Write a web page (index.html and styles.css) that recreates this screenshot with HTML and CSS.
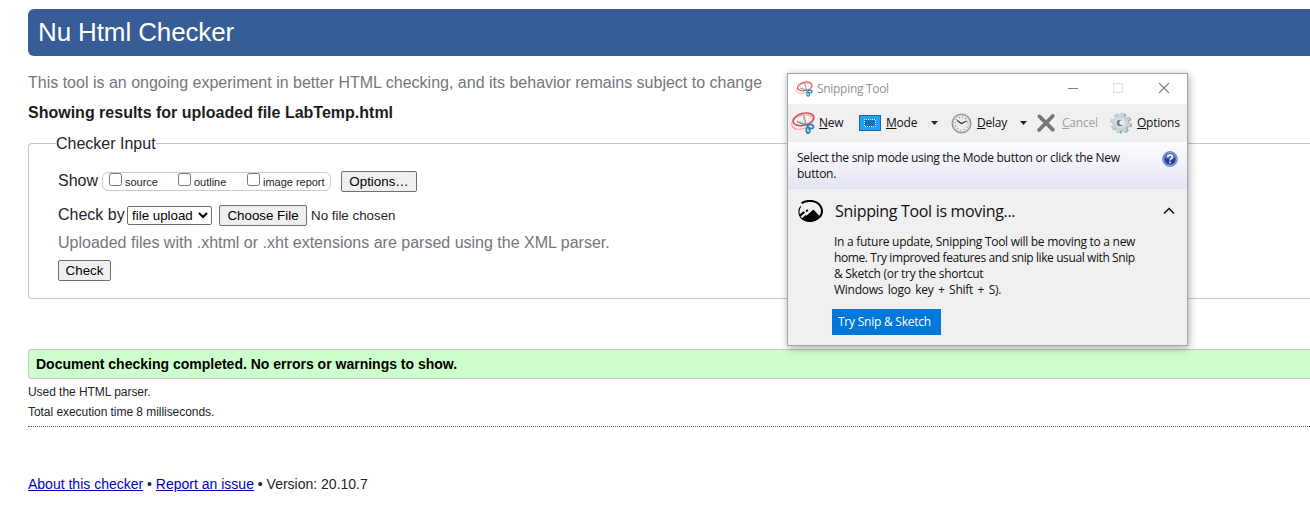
FILE: index.html
```html
<!DOCTYPE html>
<html lang="en">
<head>
<meta charset="utf-8">
<title>Nu Html Checker</title>
<link rel="stylesheet" href="styles.css">
</head>
<body>
<main class="page">
  <h1 class="banner">Nu Html Checker</h1>
  <p class="about">This tool is an ongoing experiment in better HTML checking, and its behavior remains subject to change</p>
  <h2 class="results-title">Showing results for uploaded file LabTemp.html</h2>
  <fieldset class="input">
    <legend>Checker Input</legend>
    <div class="row show-row">
      <span class="show-label">Show</span>
      <div class="show-options">
        <label><input type="checkbox"><span class="t-source">source</span></label>
        <label><input type="checkbox"><span class="t-outline">outline</span></label>
        <label><input type="checkbox"><span class="t-image">image report</span></label>
      </div>
      <button class="btn btn-options"><span>Options…</span></button>
    </div>
    <div class="row check-row">
      <span class="check-label">Check by</span>
      <select class="method"><option>file upload</option></select>
      <button class="btn btn-choose"><span>Choose File</span></button>
      <span class="no-file">No file chosen</span>
    </div>
    <p class="hint">Uploaded files with .xhtml or .xht extensions are parsed using the XML parser.</p>
    <button class="btn btn-check"><span>Check</span></button>
  </fieldset>
  <p class="success">Document checking completed. No errors or warnings to show.</p>
  <p class="stat">Used the HTML parser.</p>
  <p class="stat">Total execution time 8 milliseconds.</p>
  <footer class="footer"><a href="#">About this checker</a> • <a href="#">Report an issue</a> • Version: 20.10.7</footer>
</main>

<svg width="0" height="0" class="defs">
  <symbol id="snip" viewBox="0 0 24 22">
    <ellipse cx="11.300" cy="10" rx="11" ry="6.600" transform="rotate(-20 11.3 10)" fill="none" stroke="#efa3a7" stroke-width="1.200"/>
    <ellipse cx="12.500" cy="7.300" rx="10.600" ry="6" transform="rotate(-14 12.5 7.3)" fill="none" stroke="#dc4348" stroke-width="1.400"/>
    <path d="M12.500 3.500l2.500 9.500M6 9.500l10 4" stroke="#7b868d" stroke-width="1.500" fill="none"/>
    <path d="M12.300 4l1.800 7M7 9.300l7 2" stroke="#d0d6da" stroke-width=".7" fill="none"/>
    <ellipse cx="19.600" cy="14.500" rx="3" ry="2" transform="rotate(10 19.6 14.5)" fill="none" stroke="#2484c6" stroke-width="1.800"/>
    <ellipse cx="17" cy="18.300" rx="1.700" ry="2.800" transform="rotate(-8 17 18.3)" fill="none" stroke="#2484c6" stroke-width="1.800"/>
  </symbol>
</svg>

<section class="window">
  <header class="titlebar">
    <svg class="title-icon" width="17" height="16"><use href="#snip"/></svg>
    <span class="title">Snipping Tool</span>
    <svg class="controls" width="106" height="14" viewBox="0 0 106 14" fill="none">
      <path d="M1 6.500h10" stroke="#808080"/>
      <rect x="46.500" y="1.500" width="9" height="9" stroke="#dedede"/>
      <path d="M92 1l10 10M102 1l-10 10" stroke="#808080" stroke-width="1.100"/>
    </svg>
  </header>
  <nav class="toolbar">
    <svg class="i-new" width="24" height="22"><use href="#snip"/></svg>
    <span class="t-new"><u>N</u>ew</span>
    <svg class="i-mode" width="22" height="16" viewBox="0 0 22 16"><rect x=".5" y=".5" width="21" height="15" fill="#26a0f4" stroke="#17689f"/><rect x="5.500" y="4.500" width="11" height="7" fill="#1273b8"/><rect x="5.500" y="4.500" width="11" height="7" fill="none" stroke="#e4f5ff" stroke-dasharray="1 1" stroke-dashoffset=".5"/></svg>
    <span class="t-mode"><u>M</u>ode</span>
    <svg class="i-arrow" width="7" height="4"><path d="M0 0h7L3.500 4z" fill="#222"/></svg>
    <svg class="i-delay" width="21" height="21" viewBox="0 0 21 21"><circle cx="10.500" cy="10.500" r="9.300" fill="#e9ecee" stroke="#8d9296" stroke-width="1.500"/><circle cx="10.500" cy="10.500" r="6.500" fill="none" stroke="#777" stroke-width="1.200" stroke-dasharray=".8 2.603"/><circle cx="10.500" cy="10.500" r="8.400" fill="none" stroke="#c2c6c9"/><path d="M6 7.500l4.500 3L15.500 8" fill="none" stroke="#333" stroke-width="1.200"/></svg>
    <span class="t-delay"><u>D</u>elay</span>
    <svg class="i-arrow2" width="7" height="4"><path d="M0 0h7L3.500 4z" fill="#222"/></svg>
    <svg class="i-cancel" width="20" height="20" viewBox="0 0 20 20"><path d="M3.400 3.400C6 6 14 14 16.800 16.600M16.800 3C13 7 7 13 3 17" stroke="#777" stroke-width="3.800" stroke-linecap="round"/></svg>
    <span class="t-cancel"><u>C</u>ancel</span>
    <svg class="i-gear" width="22" height="24" viewBox="0 0 22 24"><circle cx="12" cy="12.500" r="8.500" fill="none" stroke="#8e9ba3" stroke-width="3" stroke-dasharray="3.600 3.076"/><circle cx="12" cy="12.500" r="7.700" fill="#9eabb2"/><circle cx="10.300" cy="12" r="8.600" fill="none" stroke="#c3ced4" stroke-width="3.400" stroke-dasharray="3.800 2.954"/><circle cx="10.300" cy="12" r="7.900" fill="#c9d4da"/><circle cx="10.300" cy="12" r="5.200" fill="#d9e1e5"/><circle cx="10" cy="12" r="3.300" fill="#6f7a81"/><circle cx="11.600" cy="11.700" r="2.400" fill="#eef0f1"/></svg>
    <span class="t-options"><u>O</u>ptions</span>
  </nav>
  <div class="info">
    <p><span class="l-a">Select the snip mode using the Mode button or click the New</span><br><span class="l-b">button.</span></p>
    <svg width="16" height="16" viewBox="0 0 16 16"><circle cx="8" cy="8" r="7.400" fill="#213f9e" stroke="#8493b8" stroke-width="1"/><circle cx="8" cy="8" r="6.300" fill="none" stroke="#dce4f5" stroke-width=".8"/><path d="M3 7a5 5 0 0 1 10 0Q8 8.500 3 7z" fill="#5576ca"/><path d="M5.700 6.300C5.700 3.200 10.400 3.300 10.400 5.900 10.400 7.700 8.100 7.500 8.100 9.500M8.100 10.700v1.600" stroke="#fff" stroke-width="1.600" fill="none"/></svg>
  </div>
  <div class="notice">
    <div class="notice-head">
      <svg width="25" height="23" viewBox="0 0 25 23"><path d="M3.500 3.200C9-.4 19 .1 22.700 6.500c2.100 4 1.300 8.400-1.700 11.200" fill="none" stroke="#000" stroke-width="2"/><path d="M21.700 17C17 23 5.500 22.800 2 16.300.6 13 .6 9 2.700 6.300" fill="none" stroke="#000" stroke-width="1.100"/><path d="M4 18.300L7.500 15l1 .8L15.300 9.500 22.300 16.700C17 23 8.500 23.300 4 18.300z"/><path d="M1.600 14.400L5.500 11.300 7 12.500 2.700 16.500zM7.500 10.800l1.800-1.500 1.200 1.100-2 1.900z"/></svg>
      <h3>Snipping Tool is moving...</h3>
      <svg class="chevron" width="12" height="8" viewBox="0 0 12 8"><path d="M1 6.500l5-5 5 5" fill="none" stroke="#111" stroke-width="1.500"/></svg>
    </div>
    <p class="notice-text"><span class="l-c">In a future update, Snipping Tool will be moving to a new</span><br><span class="l-d">home. Try improved features and snip like usual with Snip</span><br><span class="l-e">&amp; Sketch (or try the shortcut</span><br><span class="l-f">Windows logo key + Shift + S).</span></p>
    <button class="try"><span>Try Snip &amp; Sketch</span></button>
  </div>
</section>
</body>
</html>
```
FILE: styles.css
```css
* { box-sizing: border-box; }
body { margin: 0; background: #fff; color: #24242a; font: 16px/18px "Liberation Sans", Arial, sans-serif; overflow: hidden; }
p, h1, h2, h3 { margin: 0; }
span { white-space: nowrap; }
.page { width: 1310px; height: 511px; padding: 9px 0 0 28px; overflow: hidden; }
.banner { height: 47px; padding-left: 10px; border-radius: 6px 0 0 6px; background: #365d95; color: #fff; font-size: 26px; font-weight: 400; line-height: 46px; letter-spacing: -.12px; }
.about { margin-top: 18px; color: #76767a; }
.results-title { margin-top: 12px; font-size: 16px; line-height: 18px; color: #1c1c20; }
.input { height: 164px; margin: 13px 0 0; padding: 19px 0 0 29px; border: 1px solid #c4c4c4; border-right: 0; border-radius: 4px 0 0 4px; }
.input legend { margin-left: -2px; padding: 0; line-height: 17px; }
.row { display: flex; align-items: center; }
.show-row { height: 21px; }
.show-label { width: 44px; margin-bottom: 2px; }
.show-options { display: flex; width: 229px; height: 19px; border: 1px solid #ccc; border-radius: 6px; padding-left: 6px; font-size: 11px; letter-spacing: -.02px; }
.show-options label { display: flex; width: 69px; }
.show-options input { width: 13px; height: 13px; margin: 0 3px 0 0; flex: none; }
.show-options span { line-height: 18px; }
.btn { height: 21px; padding: 0; border: 1px solid #6f6f6f; border-radius: 2px; background: #efefef; color: #000; font: 13.333px/18px "Liberation Sans", Arial, sans-serif; text-align: center; }
.btn-options { width: 76px; margin-left: 10px; }
.check-row { height: 21px; margin-top: 13px; }
.check-label { width: 69px; margin-bottom: 2px; }
.method { width: 85px; height: 19px; padding: 0; border: 1px solid #6f6f6f; border-radius: 2px; background: #fff; color: #000; font: 13.333px "Liberation Sans", Arial, sans-serif; }
.btn-choose { width: 88px; margin: 0 4px 0 7px; }
.no-file { font-size: 13.333px; }
.hint { margin-top: 8px; color: #76767a; }
.btn-check { display: block; width: 53px; margin-top: 8px; }
.success { height: 30px; margin-top: 50px; padding-left: 7px; border: 1px solid #c4c4c4; border-right: 0; border-radius: 4px 0 0 4px; background: #cfc; color: #000; font-size: 14px; font-weight: 700; line-height: 29px; }
.stat { height: 20px; font-size: 12px; line-height: 26px; letter-spacing: -.05px; }
.stat + .stat { height: 28px; border-bottom: 1px dotted #555; }
.footer { margin-top: 48px; font-size: 14px; }
.footer a { color: #0000c8; }
.defs { position: absolute; }

.window { position: absolute; left: 787px; top: 73px; width: 401px; height: 273px; border: 1px solid #a4a4a4; background: #f0f0f0; box-shadow: 1px 2px 8px rgba(0,0,0,.35); color: #111; font: 12px/16px "Open Sans", "Noto Sans", sans-serif; }
.titlebar { display: flex; align-items: center; height: 30px; padding: 0 14px 0 8px; background: #fff; color: #929292; }
.title { margin-left: 4px; letter-spacing: -.3px; }
.controls { margin-left: auto; }
.toolbar { display: flex; align-items: center; height: 38px; letter-spacing: -.24px; }
.toolbar span { flex: none; line-height: 18px; }
.toolbar svg { flex: none; }
.toolbar u { text-decoration: underline 1px; text-underline-offset: 1px; text-decoration-skip-ink: none; }
.i-new { margin-left: 3px; }
.t-new { margin-left: 4px; width: 40px; }
.t-mode { margin-left: 5px; width: 45px; }
.t-delay { margin-left: 5px; width: 43px; }
.i-delay { margin-left: 13px; }
.i-cancel { margin-left: 9px; }
.t-cancel { margin-left: 6px; width: 46px; color: #a0a0a0; }
.i-gear { margin-left: 2px; }
.t-options { margin-left: 5px; }
.info { display: flex; justify-content: space-between; height: 47px; padding: 8px 9px 0 9px; background: linear-gradient(#fdfdff, #e3e4f2); }
.info svg { margin-top: 1px; }
.notice { padding: 10px 12px 0 10px; }
.notice-head { display: flex; align-items: center; height: 24px; }
.notice-head h3 { margin-left: 12px; font-size: 16px; font-weight: 400; line-height: 22px; letter-spacing: -.32px; white-space: nowrap; }
.chevron { margin-left: auto; }
.notice-text { margin: 11px 0 0 36px; }
.l-a { letter-spacing: -.28px; }
.l-b, .l-c, .l-e { letter-spacing: -.28px; }
.l-d { letter-spacing: -.4px; }
.l-f { letter-spacing: -.27px; word-spacing: 1.7px; }
.try { display: block; width: 109px; height: 26px; margin: 11px 0 0 34px; padding: 0 0 0 6px; border: 0; background: #0078d7; color: #fff; font: 12px/24px "Open Sans", "Noto Sans", sans-serif; letter-spacing: -.24px; text-align: left; }
```
